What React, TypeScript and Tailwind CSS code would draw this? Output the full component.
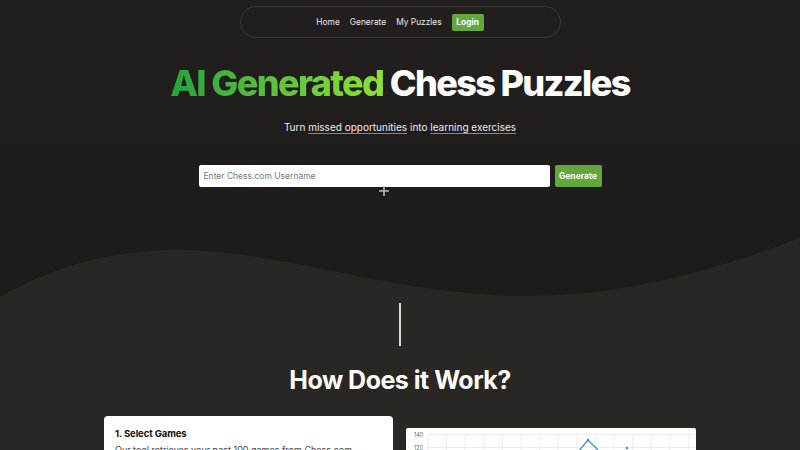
export default function App() {
	const gridX = Array.from({ length: 15 }, (_, i) => 22 + i * 18.6);

	return (
		<div className="w-[800px] h-[450px] overflow-hidden bg-[#292724] font-['Inter','Liberation_Sans',sans-serif]">
			<div className="bg-gradient-to-b from-[#221f1e] to-[#1d1c1b] pt-[6px] flex flex-col items-center">
				<nav className="w-[321px] h-[32px] rounded-full border border-[#3a3836] flex items-center justify-center gap-[10px] text-[8.4px] text-[#e8e8e8]">
					<a>Home</a>
					<a>Generate</a>
					<a>My Puzzles</a>
					<button className="bg-[#62a83d] text-white font-bold rounded-[2px] w-[32px] h-[17px]">
						Login
					</button>
				</nav>

				<h1 className="mt-[23px] text-[36px] leading-[44px] font-extrabold tracking-[-0.045em] text-white">
					<span className="bg-gradient-to-r from-[#22a33c] to-[#8ee03a] bg-clip-text text-transparent">
						AI Generated
					</span>{" "}
					Chess Puzzles
				</h1>

				<p className="mt-[15px] text-[10px] text-[#ececec]">
					Turn{" "}
					<span className="underline decoration-[#5fae3b] underline-offset-[2px]">missed opportunities</span> into{" "}
					<span className="underline decoration-[#5fae3b] underline-offset-[2px]">learning exercises</span>
				</p>

				<div className="mt-[30px] flex gap-[5px]">
					<input
						className="w-[351px] h-[22px] bg-white rounded-[2px] px-[5px] text-[8.5px] text-[#333] placeholder-[#777] outline-none"
						placeholder="Enter Chess.com Username"
					/>
					<button className="w-[47px] h-[22px] bg-[#62a83d] rounded-[2px] text-white text-[8.5px] font-bold">
						Generate
					</button>
				</div>

				<svg width="12" height="12" viewBox="0 0 12 12" className="ml-[-32px] mt-[-2px]">
					<path d="M6 1v10M1 6h10" stroke="#bbb" strokeWidth="1.6" />
				</svg>

				<div className="h-[41px]" />
				<svg width="800" height="61" viewBox="0 0 800 61" className="block">
					<path
						d="M0 59 C 60 24, 120 12, 180 12 C 280 12, 400 58, 525 58 C 630 58, 720 30, 800 0 L800 61 L0 61 Z"
						fill="#292724"
					/>
				</svg>
			</div>

			<div className="flex flex-col items-center">
				<div className="mt-[4px] w-[1.5px] h-[43px] bg-[#d8d8d8]" />
				<h2 className="mt-[18px] text-[25px] leading-[32px] font-bold tracking-[-0.02em] text-white">
					How Does it Work?
				</h2>

				<div className="mt-[20px] w-[592px] flex gap-[13px] items-start">
					<div className="w-[289px] h-[80px] bg-white rounded-[4px] px-[11px] pt-[11px]">
						<h3 className="text-[9.5px] font-bold text-[#111] tracking-[-0.01em]">1. Select Games</h3>
						<p className="mt-[2px] text-[9px] text-[#444]">
							Our tool retrieves your past 100 games from Chess.com
						</p>
					</div>
					<div className="mt-[12px] w-[290px] h-[80px] bg-white rounded-[2px] overflow-hidden">
						<svg width="290" height="80" viewBox="0 0 290 80" className="block">
							{gridX.map((x) => (
								<line key={x} x1={x} y1="6" x2={x} y2="80" stroke="#ececec" strokeWidth="1" />
							))}
							<line x1="22" y1="6.5" x2="290" y2="6.5" stroke="#ececec" />
							<line x1="22" y1="19.5" x2="290" y2="19.5" stroke="#ececec" />
							<text x="8" y="9" fontSize="5.5" fill="#666">140</text>
							<text x="8" y="22" fontSize="5.5" fill="#666">120</text>
							<polyline points="172,24 182,12 194,24" fill="none" stroke="#3a8fd6" strokeWidth="1.3" />
							<circle cx="182" cy="12" r="1.2" fill="#3a8fd6" />
							<circle cx="221" cy="20" r="1.2" fill="#3a8fd6" />
						</svg>
					</div>
				</div>
			</div>
		</div>
	);
}
